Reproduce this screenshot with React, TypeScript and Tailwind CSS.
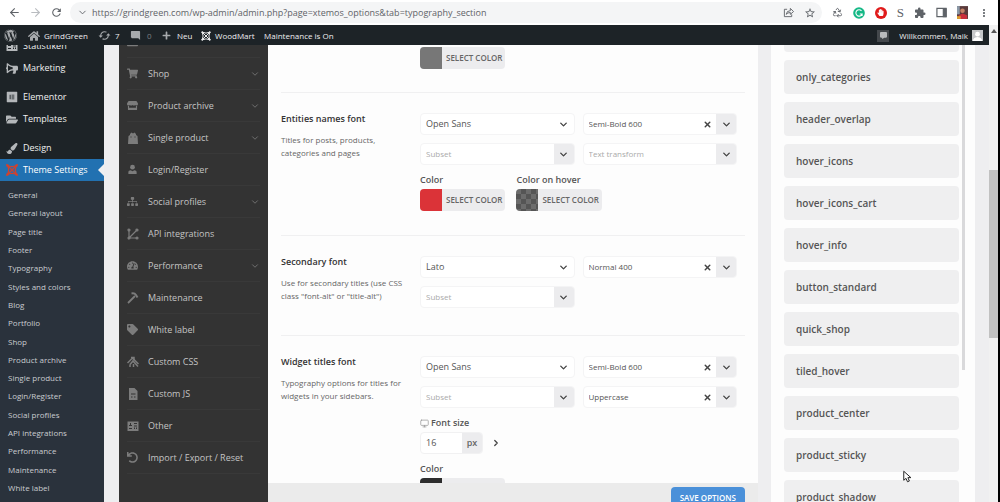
import { ArrowLeft, ArrowRight, ChevronDown, ChevronRight, Monitor, Recycle, X } from "lucide-react";
import {
    FaBriefcase, FaBullhorn, FaCommentAlt, FaElementor, FaFolderOpen, FaHammer, FaHandPaper, FaHome, FaPaintBrush, FaPlus,
    FaShoppingCart, FaSitemap, FaStore, FaTachometerAlt, FaTag, FaUndo, FaWordpress,
} from "react-icons/fa";
import { MdExtension, MdModeComment, MdMoreVert, MdRefresh, MdStarBorder, MdSync } from "react-icons/md";

const submenu = [
    "General", "General layout", "Page title", "Footer", "Typography", "Styles and colors", "Blog", "Portfolio", "Shop",
    "Product archive", "Single product", "Login/Register", "Social profiles", "API integrations", "Performance",
    "Maintenance", "White label",
];

const presets = [
    "only_categories", "header_overlap", "hover_icons", "hover_icons_cart", "hover_info", "button_standard",
    "quick_shop", "tiled_hover", "product_center", "product_sticky", "product_shadow",
];

const sections = [
    { name: "Shop", icon: <FaShoppingCart />, open: true },
    { name: "Product archive", icon: <FaStore />, open: true },
    { name: "Single product", icon: <BagIcon />, open: true },
    { name: "Login/Register", icon: <PersonIcon />, open: false },
    { name: "Social profiles", icon: <FaSitemap />, open: true },
    { name: "API integrations", icon: <NodesIcon />, open: false },
    { name: "Performance", icon: <FaTachometerAlt />, open: true },
    { name: "Maintenance", icon: <HammerIcon />, open: false },
    { name: "White label", icon: <FaTag />, open: false },
    { name: "Custom CSS", icon: <CssIcon />, open: false },
    { name: "Custom JS", icon: <JsIcon />, open: false },
    { name: "Other", icon: <OtherIcon />, open: false },
    { name: "Import / Export / Reset", icon: <FaUndo />, open: false },
];

function BagIcon() {
    return (
        <svg viewBox="0 0 12 12" width="12" height="12" fill="currentColor">
            <path d="M1.500 4 3 3V2l1.500-1.500L6 1.500 7.500.5 9 2v1l1.500 1 .5 8H1zM3.500 4.500v1h1v-1zm4 0v1h1v-1z" fillRule="evenodd" />
        </svg>
    );
}

function PersonIcon() {
    return (
        <svg viewBox="0 0 12 12" width="11" height="11" fill="currentColor">
            <circle cx="6" cy="3.500" r="2.600" />
            <path d="M1.500 11V8.500Q1.500 7 4 6.700L6 8l2-1.300q2.500.3 2.500 1.800V11z" />
        </svg>
    );
}

function NodesIcon() {
    return (
        <svg viewBox="0 0 12 12" width="12" height="12" fill="currentColor" stroke="currentColor" strokeWidth="1.200">
            <path d="M2 2v8l8-8M2 10h8" fill="none" />
            <circle cx="2" cy="2" r="1" /><circle cx="10" cy="2" r="1" />
            <circle cx="2" cy="10" r="1" /><circle cx="10" cy="10" r="1" />
        </svg>
    );
}

function HammerIcon() {
    return (
        <svg viewBox="0 0 12 12" width="12" height="12" fill="none" stroke="currentColor">
            <path d="M1 11 8 4" strokeWidth="1.800" />
            <path d="M4.500 1.500Q7.500.8 9 3l1.500 2.500" strokeWidth="2" />
        </svg>
    );
}

function CssIcon() {
    return (
        <svg viewBox="0 0 12 12" width="12" height="12" fill="none" stroke="currentColor" strokeWidth="1.500">
            <path d="M.5 7 5.500 2l6 6M3 8.500 6 5l5 5.500M3 11V8.500M6.500 11V8" />
            <path d="M4 1.500h3V4" />
        </svg>
    );
}

function JsIcon() {
    return (
        <svg viewBox="0 0 12 12" width="12" height="12" fill="currentColor">
            <path d="M2 0h5.500L10.500 3v9H2zM4 5.500v1h4.500v-1zm0 3v1h1.500v-1zm3 0v1h1.500v-1z" fillRule="evenodd" />
        </svg>
    );
}

function OtherIcon() {
    return (
        <svg viewBox="0 0 12 12" width="12" height="12" fill="currentColor">
            <path d="M.5 1.500h11v9.500H.5zM3 3v2H2v1h3V5H4V3zm4 0v1h3V3zm0 2.500v1h3v-1zM2 8v1h3V8zm5-.5V9h1v-1.500zm2 0V9h1v-1.500z" fillRule="evenodd" />
        </svg>
    );
}

// crossed rings used as the theme logo
function WoodmartIcon({ size }: { size: number }) {
    return (
        <svg viewBox="0 0 14 14" width={size} height={size} fill="none" stroke="currentColor" strokeWidth="1.400">
            <path d="M1.500 1.500 12.500 12.500M12.500 1.500 1.500 12.500" />
            <path d="M1.500 1.500Q7 4.500 12.500 1.500Q9.500 7 12.500 12.500Q7 9.500 1.500 12.500Q4.500 7 1.500 1.500z" />
            <circle cx="1.700" cy="1.700" r=".8" /><circle cx="12.300" cy="1.700" r=".8" />
            <circle cx="1.700" cy="12.300" r=".8" /><circle cx="12.300" cy="12.300" r=".8" />
        </svg>
    );
}

function BrowserBar() {
    return (
        <div className="flex h-[25px] shrink-0 items-center bg-white text-[#5f6368]">
            <div className="flex w-[70px] items-center gap-2 pl-2">
                <button aria-label="Back"><ArrowLeft size={13} /></button>
                <button aria-label="Forward" className="text-[#b9bcc0]"><ArrowRight size={13} /></button>
                <button aria-label="Reload"><MdRefresh size={13} /></button>
            </div>
            <div className="flex h-[21px] flex-1 items-center rounded-full bg-[#f4f5f6] pl-[7px] pr-1.5">
                <ChevronDown size={11} />
                <input
                    aria-label="Address"
                    className="ml-1 min-w-0 flex-1 bg-transparent text-[9px] outline-none"
                    defaultValue="https://grindgreen.com/wp-admin/admin.php?page=xtemos_options&tab=typography_section"
                />
                <button aria-label="Share" className="mr-2.5">
                    <svg viewBox="0 0 12 12" width="11" height="11" fill="none" stroke="currentColor">
                        <path d="M4.500 2.500H1.500v8h8V8M3.500 8Q4 4 8 4V1.500L11.500 5 8 8V6Q5 6 3.500 8z" />
                    </svg>
                </button>
                <button aria-label="Bookmark"><MdStarBorder size={12} /></button>
            </div>
            <div className="flex w-44 items-center justify-between pl-2.5 pr-2">
                <Recycle size={11} />
                <svg viewBox="0 0 12 12" width="12" height="12">
                    <circle cx="6" cy="6" r="5.800" fill="#15b886" />
                    <path d="M8.500 3.800A3.200 3.200 0 1 0 9.100 7H6.800M9.100 7v2" fill="none" stroke="#fff" strokeWidth="1.100" />
                </svg>
                <span className="flex size-3 items-center justify-center rounded-full bg-[#e01b1b] text-white"><FaHandPaper size={7} /></span>
                <span className="font-['Liberation_Serif'] text-[13px] leading-3">S</span>
                <MdExtension size={12} />
                <svg viewBox="0 0 12 12" width="11" height="11" fill="none" stroke="currentColor" strokeWidth="1.300">
                    <path d="M1 1.500h10v9H1z" /><path d="M8 2h3v8.500H8z" fill="currentColor" />
                </svg>
                <svg viewBox="0 0 12 14" width="11" height="13">
                    <path d="M0 0h12v14H0z" fill="#5a3a3c" />
                    <path d="M0 0h3v9H0z" fill="#8c9aa8" />
                    <path d="M2 14V10l4-2 5 2v4z" fill="#c92f3d" />
                    <path d="M0 11h4v3H0z" fill="#e0a030" />
                    <circle cx="6" cy="5" r="2.500" fill="#c48468" />
                </svg>
                <MdMoreVert size={12} />
            </div>
        </div>
    );
}

function AdminBar() {
    return (
        <div className="flex h-5 shrink-0 items-center bg-[#1d2327] pt-px pl-1 pr-1.5 text-[8px] text-[#eeeeef]">
            <a href="#wp" aria-label="WordPress" className="w-6 text-[#a7aaad]"><FaWordpress size={13} /></a>
            <a href="#site" className="flex w-[70px] items-center gap-1"><FaHome size={12} className="text-[#a7aaad]" />GrindGreen</a>
            <a href="#updates" className="flex w-8 items-center gap-1"><MdSync size={13} className="rotate-90 text-[#a7aaad]" />7</a>
            <a href="#comments" className="flex w-8 items-center gap-1.5 text-[#7b7f83]"><MdModeComment size={11} className="text-[#a7aaad]" />0</a>
            <a href="#new" className="flex w-[39px] items-center gap-1.5"><FaPlus size={9} className="text-[#a7aaad]" />Neu</a>
            <a href="#woodmart" className="flex w-[63px] items-center gap-1 whitespace-nowrap"><WoodmartIcon size={10} />WoodMart</a>
            <a href="#maintenance" className="whitespace-nowrap">Maintenance is On</a>
            <div className="ml-auto flex items-center">
                <span className="mr-2.5 flex size-3 items-center justify-center bg-[#44484c] text-[#b9bbbd]"><FaCommentAlt size={7} /></span>
                <a href="#profile" className="flex items-center gap-1">
                    Willkommen, Maik
                    <svg viewBox="0 0 12 12" width="11" height="11">
                        <path d="M0 0h12v12H0z" fill="#c6c8ca" />
                        <circle cx="6" cy="4.500" r="2.600" fill="#fff" />
                        <path d="M1 12q0-4 5-4.500 5 .5 5 4.500z" fill="#fff" />
                    </svg>
                </a>
            </div>
        </div>
    );
}

function AdminMenu() {
    const item = "flex h-[22px] shrink-0 items-center gap-[5px] pl-1.5 [&>svg]:w-3 [&>svg]:text-[#b4b7ba]";
    return (
        <nav className="flex w-[104px] shrink-0 flex-col bg-[#1d2327] text-[9px] text-[#f0f0f1]">
            <div className="-mt-2.5 flex flex-col">
                <a href="#statistics" className={item}><OtherIcon />Statistiken</a>
                <a href="#marketing" className={item}><FaBullhorn size={11} className="-scale-x-100" />Marketing</a>
                <a href="#elementor" className={item + " mt-[7px]"}><FaElementor size={12} />Elementor</a>
                <a href="#templates" className={item}><FaFolderOpen size={11} />Templates</a>
                <a href="#design" className={item + " mt-[7px]"}><FaPaintBrush size={11} />Design</a>
                <a href="#theme" className={item + " relative bg-[#2271b1] text-white"}>
                    <span className="text-[#d0432f]"><WoodmartIcon size={12} /></span>Theme Settings
                    <span className="absolute right-0 border-y-6 border-r-6 border-y-transparent border-r-[#f0f0f1]"></span>
                </a>
            </div>
            <ul className="flex flex-1 flex-col justify-between bg-[#2a323c] pb-[5px] pl-2 pt-[5px] text-[8px] text-[#c9ccd0]">
                {submenu.map((name) => (
                    <li key={name} className="flex h-[18px] items-center"><a href="#theme">{name}</a></li>
                ))}
            </ul>
        </nav>
    );
}

function SectionTabs() {
    return (
        <nav className="w-[149px] shrink-0 overflow-hidden bg-[#333] px-2">
            <div className="-mt-[19px]">
                <a href="#section" aria-label="Portfolio" className="flex h-8 items-center border-b border-[#393939] text-[11px] text-[#7c7c7c]"><FaBriefcase /></a>
                {sections.map(({ name, icon, open }) => (
                    <a key={name} href="#section" className="flex h-8 items-center border-b border-[#393939] text-[9px] text-[#c4c4c4]">
                        <span className="w-[21px] text-[11px] text-[#7c7c7c]">{icon}</span>
                        {name}
                        {open && <ChevronDown size={10} className="ml-auto text-[#7c7c7c]" />}
                    </a>
                ))}
            </div>
        </nav>
    );
}

function Field({ label, value, empty, clear, plain }: { label: string; value: string; empty?: boolean; clear?: boolean; plain?: boolean }) {
    return (
        <div className="relative flex h-[22px] items-center overflow-hidden rounded-sm border border-[#f4f4f5] bg-white">
            <select aria-label={label} className={"h-full min-w-0 flex-1 appearance-none bg-transparent pl-[5px] outline-none " + (empty ? "text-[#aaa]" : "text-[#555]") + (plain ? " text-[9px]" : " text-[8px]")}>
                <option>{value}</option>
            </select>
            {clear && <button aria-label="Clear" className="mr-1 text-[#444]"><X size={9} strokeWidth={4} /></button>}
            <span className={"pointer-events-none flex h-full w-5 items-center justify-center text-[#444]" + (plain ? " absolute right-0" : " bg-[#ececee]")}>
                <ChevronDown size={11} strokeWidth={3} />
            </span>
        </div>
    );
}

function ColorButton({ label, swatch }: { label?: string; swatch: string }) {
    return (
        <div>
            {label && <div className="mb-0.5 text-[9px] leading-[14px] font-semibold text-[#555]">{label}</div>}
            <button aria-label={label} className="flex h-[22px] items-center overflow-hidden rounded-sm bg-[#ececee] pr-[3px] text-[8px] font-semibold text-[#666]">
                <span className={"mr-1 h-full w-[22px] " + swatch}></span>
                SELECT COLOR
            </button>
        </div>
    );
}

function Option({ title, text, children }: { title: string; text: string; children: any }) {
    return (
        <section className="flex border-t border-[#f0f0f1] pt-5">
            <div className="w-[139px] shrink-0 pr-3">
                <h3 className="text-[9px] leading-3 font-semibold text-[#333]">{title}</h3>
                <p className="mt-2 text-[8px] leading-[13px] text-[#666]">{text}</p>
            </div>
            <div className="min-w-0 flex-1 pr-2">{children}</div>
        </section>
    );
}

function Options() {
    const grid = "grid grid-cols-2 gap-2";
    return (
        <main className="flex min-w-0 flex-1 flex-col bg-[#ebebeb]">
            <div className="min-h-0 flex-1 overflow-hidden bg-[#fdfdfd] px-[13px] pt-0.5">
                <div className="pb-[23px] pl-[139px]"><ColorButton swatch="bg-[#777]" /></div>
                <div className="flex flex-col gap-[23px]">
                    <Option title="Entities names font" text="Titles for posts, products, categories and pages">
                        <div className={grid}>
                            <Field label="Font" value="Open Sans" plain />
                            <Field label="Weight" value="Semi-Bold 600" clear />
                            <Field label="Subset" value="Subset" empty />
                            <Field label="Text transform" value="Text transform" empty />
                        </div>
                        <div className="mt-2 flex gap-[11px] pb-px">
                            <ColorButton label="Color" swatch="bg-[#db3338]" />
                            <ColorButton label="Color on hover" swatch="bg-[repeating-conic-gradient(#555_0_25%,#6c6c6c_0_50%)] bg-size-[10px_10px]" />
                        </div>
                    </Option>
                    <Option title="Secondary font" text={'Use for secondary titles (use CSS class "font-alt" or "title-alt")'}>
                        <div className={grid + " pb-1"}>
                            <Field label="Font" value="Lato" plain />
                            <Field label="Weight" value="Normal 400" clear />
                            <Field label="Subset" value="Subset" empty />
                        </div>
                    </Option>
                    <Option title="Widget titles font" text="Typography options for titles for widgets in your sidebars.">
                        <div className={grid}>
                            <Field label="Font" value="Open Sans" plain />
                            <Field label="Weight" value="Semi-Bold 600" clear />
                            <Field label="Subset" value="Subset" empty />
                            <Field label="Text transform" value="Uppercase" clear />
                        </div>
                        <label htmlFor="size" className="mt-2 mb-0.5 flex items-center gap-0.5 text-[9px] leading-[14px] font-semibold text-[#555]">
                            <Monitor size={9} className="text-[#999]" />Font size
                        </label>
                        <div className="mb-2 flex items-center">
                            <div className="flex h-[22px] overflow-hidden rounded-sm border border-[#f1f1f2] bg-white">
                                <input id="size" defaultValue="16" className="w-[41px] pl-[5px] text-[9px] text-[#555] outline-none" />
                                <span className="flex w-5 items-center justify-center bg-[#ececee] text-[9px] font-semibold text-[#666]">px</span>
                            </div>
                            <button aria-label="More sizes" className="ml-2 text-[#444]"><ChevronRight size={10} strokeWidth={3} /></button>
                        </div>
                        <ColorButton label="Color" swatch="bg-[#2d2d2d]" />
                    </Option>
                </div>
            </div>
            <div className="flex h-[19px] shrink-0 items-start justify-end pr-[13px] pt-1">
                <button className="h-[22px] shrink-0 rounded-sm bg-[#4a90d9] px-[9px] text-[8px] font-semibold text-white">SAVE OPTIONS</button>
            </div>
        </main>
    );
}

function Presets() {
    return (
        <aside className="flex w-[204px] shrink-0 overflow-hidden bg-[#fdfdfd] pl-[13px]">
            <ul className="flex flex-1 flex-col gap-2">
                <li className="h-[7px] shrink-0 rounded-b-sm bg-[#efeff0]"></li>
                {presets.map((name) => (
                    <li key={name} className="flex h-[34px] shrink-0 items-center rounded-sm bg-[#efeff0] pl-3 text-[10px] font-semibold text-[#555]">{name}</li>
                ))}
            </ul>
            <div className="ml-[3px] mr-2.5 h-[325px] w-[3px] bg-[#d9d9db]"></div>
        </aside>
    );
}

export default function App() {
    return (
        <div className="relative flex h-screen overflow-hidden bg-black pr-0.5 font-['Open_Sans',sans-serif]">
            <div className="flex min-w-0 flex-1 flex-col">
                <BrowserBar />
                <div className="flex min-h-0 flex-1">
                    <div className="flex min-w-0 flex-1 flex-col">
                        <AdminBar />
                        <div className="flex min-h-0 flex-1 overflow-hidden bg-[#eeeef0]">
                            <AdminMenu />
                            <div className="flex min-w-0 flex-1 pl-[15px] pr-3.5">
                                <SectionTabs />
                                <Options />
                                <div className="w-[13px] shrink-0"></div>
                                <Presets />
                            </div>
                        </div>
                    </div>
                    <div className="flex w-[9px] shrink-0 flex-col items-center bg-[#f1f1f1]">
                        <span className="mt-1 mb-[137px] border-x-3 border-b-4 border-x-transparent border-b-[#555]"></span>
                        <div className="h-[168px] w-full bg-[#c1c1c1]"></div>
                    </div>
                </div>
            </div>
            <svg viewBox="0 0 12 16" width="9" height="13" className="pointer-events-none absolute left-[903px] top-[470px]">
                <path d="M1 1v12l3-2.500L6 15l2.500-1L6.500 9.500h4z" fill="#fff" stroke="#222" strokeWidth="1.300" />
            </svg>
        </div>
    );
}
